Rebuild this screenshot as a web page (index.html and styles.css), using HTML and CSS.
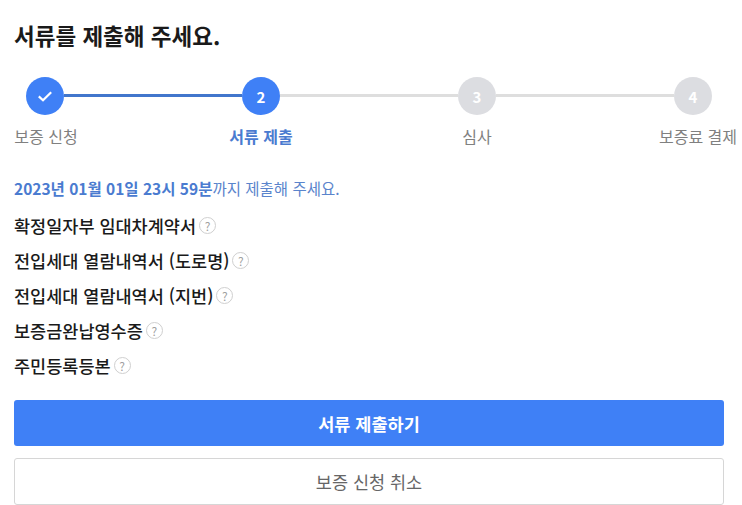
FILE: index.html
```html
<!DOCTYPE html>
<html lang="ko">
  <head>
    <meta charset="UTF-8" />
    <title>서류 제출</title>
    <link rel="stylesheet" href="styles.css">
  </head>
  <body>
    <main class="page">
      <h1 class="title">서류를 제출해 주세요.</h1>
      <ol class="steps">
        <li class="step done">
          <span class="dot">
            <svg width="16" height="16" viewBox="0 0 16 16" fill="none"><path d="M1.8 8.4l4.2 3.8 8.2-8" stroke="#fff" stroke-width="2.2"/></svg>
          </span>
          <span class="label">보증 신청</span>
        </li>
        <li class="bar active"></li>
        <li class="step current">
          <span class="dot">2</span>
          <span class="label">서류 제출</span>
        </li>
        <li class="bar"></li>
        <li class="step">
          <span class="dot">3</span>
          <span class="label">심사</span>
        </li>
        <li class="bar"></li>
        <li class="step">
          <span class="dot">4</span>
          <span class="label">보증료 결제</span>
        </li>
      </ol>
      <p class="deadline"><strong>2023년 01월 01일 23시 59분</strong>까지 제출해 주세요.</p>
      <ul class="docs">
        <li class="doc">확정일자부 임대차계약서<span class="help">?</span></li>
        <li class="doc">전입세대 열람내역서 (도로명)<span class="help">?</span></li>
        <li class="doc">전입세대 열람내역서 (지번)<span class="help">?</span></li>
        <li class="doc">보증금완납영수증<span class="help">?</span></li>
        <li class="doc">주민등록등본<span class="help">?</span></li>
      </ul>
      <div class="actions">
        <button class="btn primary" type="button">서류 제출하기</button>
        <button class="btn" type="button">보증 신청 취소</button>
      </div>
    </main>
  </body>
</html>
```

FILE: styles.css
```css
* {
  box-sizing: border-box;
}

body {
  margin: 0;
  background: #fff;
  font-family: "Noto Sans CJK KR", "Noto Sans", sans-serif;
  color: #1a1a1a;
}

.page {
  width: 710px;
  margin-left: 14px;
  padding-top: 21px;
}

.title {
  margin: 0;
  font-size: 22.5px;
  line-height: 28px;
  font-weight: 700;
}

.steps {
  display: flex;
  margin: 28px 0 0;
  padding: 0 12px;
  list-style: none;
}

.step {
  width: 38px;
  display: flex;
  flex-direction: column;
  align-items: center;
}

.dot {
  width: 38px;
  height: 38px;
  flex: none;
  border-radius: 50%;
  background: #dcdde1;
  color: #fff;
  font-size: 15px;
  font-weight: 700;
  display: flex;
  align-items: center;
  justify-content: center;
}

.done .dot,
.current .dot {
  background: #3f80f6;
}

.label {
  margin-top: 9px;
  font-size: 16px;
  line-height: 24px;
  white-space: nowrap;
  color: #808080;
}

.done .label {
  margin-left: 2px;
}

.step:last-child .label {
  margin-left: 10px;
}

.current .label {
  color: #4a7bd0;
  font-weight: 700;
}

.bar {
  flex: 1;
  height: 3px;
  margin-top: 17px;
  background: #dedede;
}

.bar.active {
  background: #4176cc;
}

.deadline {
  margin: 30px 0 0;
  font-size: 15.5px;
  line-height: 20px;
  color: #5a84cc;
}

.deadline strong {
  color: #4a7bd0;
}

.docs {
  margin: 10px 0 0;
  padding: 0;
  list-style: none;
}

.doc {
  height: 35px;
  display: flex;
  align-items: center;
  font-size: 17.5px;
  font-weight: 500;
  color: #1a1a1a;
}

.help {
  width: 17px;
  height: 17px;
  margin-left: 3px;
  border: 1px solid #cfcfcf;
  border-radius: 50%;
  color: #a0a0a0;
  font-size: 12px;
  font-weight: 400;
  display: flex;
  align-items: center;
  justify-content: center;
}

.actions {
  display: flex;
  flex-direction: column;
  gap: 12px;
  margin-top: 17px;
}

.btn {
  height: 47px;
  border: 1px solid #d6d6d6;
  border-radius: 3px;
  background: #fff;
  color: #666;
  font-family: inherit;
  font-size: 17.5px;
}

.btn.primary {
  height: 46px;
  border: 0;
  background: #3f80f6;
  color: #fff;
  font-weight: 700;
}
```
